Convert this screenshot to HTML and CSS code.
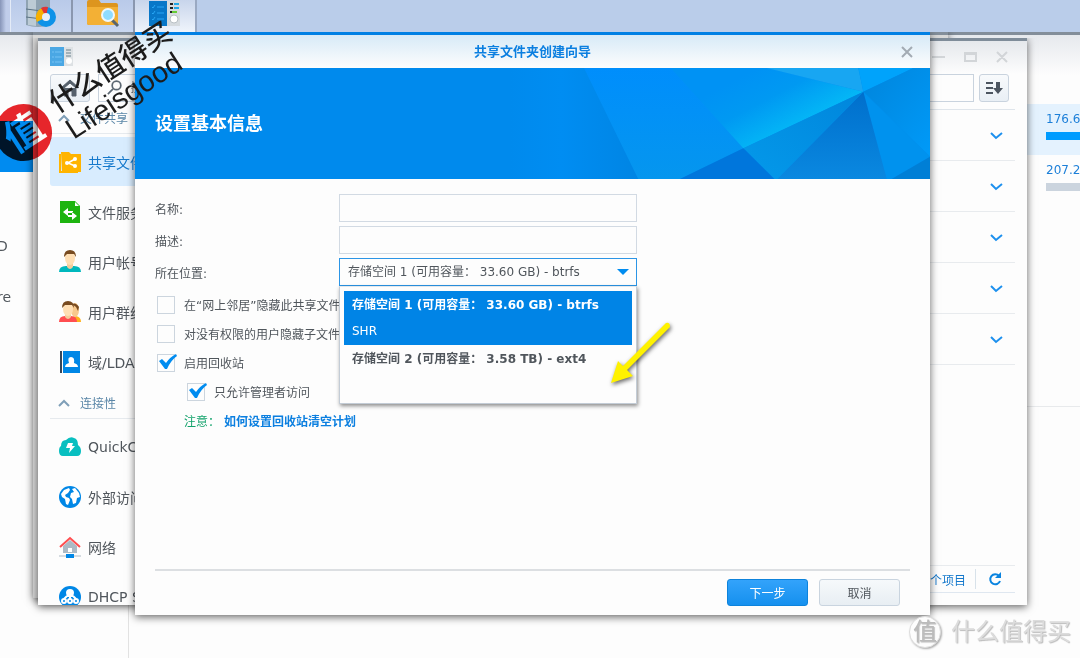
FILE: index.html
```html
<!DOCTYPE html>
<html lang="zh-CN">
<head>
<meta charset="utf-8">
<title>共享文件夹创建向导</title>
<link rel="stylesheet" href="styles.css">
</head>
<body>
<div class="desktop">
  <nav class="taskbar" aria-label="任务栏">
    <span class="task-edge"></span>
    <button class="task" type="button" aria-label="存储空间管理员">
      <svg width="34" height="32" viewBox="0 0 34 32">
        <path d="M2 0h24v25q-12 4-24 0z" fill="#8fa3b2"/><path d="M4 0h8v26l-8-1z" fill="#bccbd5"/>
        <path d="M2 9q12 3 24 0M2 17q12 3 24 0" stroke="#5c7485" fill="none"/>
        <circle cx="22" cy="17" r="10" fill="#0e92e8"/><path d="M22 17L13 22A10 10 0 0 1 18 8z" fill="#f7b000"/><path d="M22 17L17 8A10 10 0 0 1 24 7z" fill="#e03434"/>
        <circle cx="22" cy="17" r="4" fill="#e7eef7"/>
      </svg>
    </button>
    <button class="task" type="button" aria-label="文件管理">
      <svg width="34" height="32" viewBox="0 0 34 32">
        <path d="M1 2q0-2 2-2h10l2 3h15q2 0 2 2v18q0 2-2 2H3q-2 0-2-2z" fill="#dd951e"/><path d="M1 7h31v16q0 2-2 2H3q-2 0-2-2z" fill="#f3b035"/>
        <path d="M26 20l6 6" stroke="#59656d" stroke-width="3"/><circle cx="22" cy="15" r="6" fill="#8fdcff" stroke="#eef7fc" stroke-width="2"/>
      </svg>
    </button>
    <button class="task task-active" type="button" aria-label="控制面板">
      <svg width="34" height="32" viewBox="0 0 34 32">
        <path d="M1 1h18v25H1z" fill="#0877c8"/><path d="M19 1h13v25H19z" fill="#d6dbdf"/>
        <path d="M4 7l1 1 2-3M4 13l1 1 2-3M4 19l1 1 2-3M9 7h7M9 13h7M9 19h7" stroke="#28a6f5" fill="none"/>
        <path d="M22 4h3m-3 4h3m-3 4h3" stroke="#222" stroke-width="2"/><path d="M26 4h5M26 8h5" stroke="#1fa7e8" stroke-width="2"/><path d="M24 12h5" stroke="#6c3" stroke-width="2"/>
        <circle cx="26" cy="19" r="4" fill="#fff" stroke="#b9c0c5"/>
      </svg>
    </button>
  </nav>

  <section class="storage" aria-label="存储空间管理员">
    <div class="storage-nav">
      <a class="storage-item selected" href="#overview" aria-label="总览"></a>
      <a class="storage-item" href="#d">D</a>
      <a class="storage-item" href="#re">re</a>
    </div>
    <div class="storage-main">
      <div class="volumes">
        <div class="volume current">176.60 GB<span class="meter"></span></div>
        <div class="volume">207.21 GB<span class="meter"></span></div>
      </div>
    </div>
  </section>

  <div class="window behind"></div>

  <section class="window panel" aria-label="控制面板">
    <header class="panel-head">
      <svg width="24" height="20" viewBox="0 0 24 20"><path d="M0 0h14v19H0z" fill="#4aa7e4"/><path d="M14 0h9v19h-9z" fill="#dde1e4"/><path d="M2 5h2m1 0h7M2 10h2m1 0h7M2 15h2m1 0h7" stroke="#74c2f4"/><path d="M16 3h5m-5 3h5m-5 3h5" stroke="#69808c"/><circle cx="19" cy="14" r="3" fill="#fff"/></svg>
      <svg class="win-tools" width="78" height="16" viewBox="0 0 78 16" fill="none" stroke="#d2d5d8" stroke-width="2"><path d="M1 8h13M34 4h11v8H34zM34 5h11M66 3l10 10M76 3L66 13"/></svg>
    </header>
    <div class="toolbar">
      <button class="tool home" type="button" aria-label="主页"><svg width="20" height="18" viewBox="0 0 20 18"><path d="M1 9l9-8 9 8M4 9v8h4v-5h4v5h4V9l-6-5z" fill="#56616c" stroke="#56616c" stroke-width="1"/></svg></button>
      <label class="search"><svg width="18" height="18" viewBox="0 0 18 18" fill="none" stroke="#5c6873" stroke-width="2"><circle cx="11" cy="6" r="5"/><path d="M7 10l-6 6"/></svg><input type="text" placeholder="搜索" aria-label="搜索设置"></label>
      <input class="filter" type="text" aria-label="筛选">
      <button class="tool" type="button" aria-label="排序"><svg width="18" height="14" viewBox="0 0 18 14"><path d="M1 2h7M1 7h7M1 12h7" stroke="#4c5560" stroke-width="2"/><path d="M11 1h4v6h3l-5 6-5-6h3z" fill="#4c5560"/></svg></button>
    </div>
    <div class="panel-body">
      <nav class="sidebar">
        <h3 class="group"><svg width="12" height="8" viewBox="0 0 12 8"><path d="M1 7l5-5 5 5"/></svg>文件共享</h3>
        <a class="entry active" href="#share"><svg width="22" height="22" viewBox="0 0 22 22"><path d="M0 3h2v17h17v2H0z" fill="#ffb400"/><path d="M2 1h8l2 2h10v18H3z" fill="#ffb400"/><path d="M16 8l-7 4 7 3" stroke="#fff" stroke-width="1.5" fill="none"/><circle cx="16" cy="8" r="2" fill="#fff"/><circle cx="8" cy="12" r="2" fill="#fff"/><circle cx="16" cy="15" r="2" fill="#fff"/></svg>共享文件夹</a>
        <a class="entry" href="#service"><svg width="22" height="22" viewBox="0 0 22 22"><path d="M1 0h15l5 5v17H1z" fill="#1db40f"/><path d="M16 1l4 4h-4z" fill="#fff"/><path d="M4 11l5-4v3h5v2H9v3zM18 15l-5-4v3H9v2h4v3z" fill="#fff"/></svg>文件服务</a>
        <a class="entry" href="#user"><svg width="22" height="23" viewBox="0 0 22 23"><path d="M0 22q0-6 7-6h8q7 0 7 6z" fill="#00b8bd"/><path d="M8 12h6v5q-3 4-6 0z" fill="#f3cc9b"/><ellipse cx="11" cy="8" rx="5" ry="7" fill="#ffdfb4"/><path d="M5 7Q5 0 11 0t6 7l-2-3H8z" fill="#784b20"/></svg>用户帐号</a>
        <a class="entry" href="#group"><svg width="22" height="23" viewBox="0 0 22 23"><path d="M12 22q0-6 5-6 5 1 5 6z" fill="#ffb21c"/><ellipse cx="16" cy="10" rx="4" ry="7" fill="#f8c98d"/><path d="M13 4q4-2 7 3l-1 4-2-4z" fill="#784b20"/><path d="M0 22q0-6 6-6h6q6 0 6 6z" fill="#ff4e50"/><path d="M6 12h6v5q-3 4-6 0z" fill="#f3cc9b"/><ellipse cx="9" cy="9" rx="5" ry="7" fill="#ffdfb4"/><path d="M3 8Q3 1 9 1t6 7l-2-3H6z" fill="#784b20"/></svg>用户群组</a>
        <a class="entry" href="#ldap"><svg width="22" height="22" viewBox="0 0 22 22"><path d="M1 0h2v22H1z" fill="#38475a"/><path d="M4 0h17v22H4z" fill="#0087e6"/><path d="M7 16q0-3 4-3-2-7 2-7" fill="none"/><path d="M6 16q0-3 4-4-2-6 2-6t3 6q4 1 4 4z" fill="#fff"/></svg>域/LDAP</a>
        <h3 class="group"><svg width="12" height="8" viewBox="0 0 12 8"><path d="M1 7l5-5 5 5"/></svg>连接性</h3>
        <a class="entry" href="#quick"><svg width="22" height="22" viewBox="0 0 22 22"><path d="M4 20q-4 0-4-5 0-4 2-5 0-6 5-6 4-4 8-2 4 1 4 7 3 2 3 6 0 5-4 5z" fill="#08bfc0"/><path d="M9 7h5l-1 3h3l-6 7 1-5H7z" fill="#fff"/></svg>QuickConnect</a>
        <a class="entry" href="#access"><svg width="22" height="22" viewBox="0 0 22 22"><circle cx="11" cy="11" r="11" fill="#0087e6"/><path d="M2 8l3-4 5-2 1 2-2 3-3 2 1 2 3 1 1 2-2 5-2-1-1-5-3-2zM13 3l3-1 4 5 1 4-3 1-1 5-3 1-1-5-2-2 1-4 3-1z" fill="#fff"/></svg>外部访问</a>
        <a class="entry" href="#network"><svg width="22" height="22" viewBox="0 0 22 22"><path d="M4 10l7-6 7 6v7H4z" fill="#adbac5"/><path d="M1 11l10-9 10 9" stroke="#ff4e50" stroke-width="2" fill="none"/><path d="M9 12h4v4H9z" fill="#fff"/><path d="M0 20h22" stroke="#adbac5"/><path d="M7 18h8v4H7z" fill="#0087e6"/></svg>网络</a>
        <a class="entry" href="#dhcp"><svg width="22" height="22" viewBox="0 0 22 22"><circle cx="11" cy="11" r="11" fill="#0087e6"/><path d="M11 3q4 0 4 4l-1 4h-6L7 7q0-4 4-4z" fill="#fff"/><g fill="none" stroke="#fff" stroke-width="2"><path d="M8 10l-3 3M11 10v3M14 10l3 3"/><circle cx="5" cy="15" r="2"/><circle cx="11" cy="15" r="2"/><circle cx="17" cy="15" r="2"/></g></svg>DHCP Server</a>
      </nav>
      <div class="shares">
        <button class="share-row" type="button" aria-label="展开 1"><svg width="13" height="9" viewBox="0 0 13 9"><path d="M1 1l5 5 6-5"/></svg></button>
        <button class="share-row" type="button" aria-label="展开 2"><svg width="13" height="9" viewBox="0 0 13 9"><path d="M1 1l5 5 6-5"/></svg></button>
        <button class="share-row" type="button" aria-label="展开 3"><svg width="13" height="9" viewBox="0 0 13 9"><path d="M1 1l5 5 6-5"/></svg></button>
        <button class="share-row" type="button" aria-label="展开 4"><svg width="13" height="9" viewBox="0 0 13 9"><path d="M1 1l5 5 6-5"/></svg></button>
        <button class="share-row" type="button" aria-label="展开 5"><svg width="13" height="9" viewBox="0 0 13 9"><path d="M1 1l5 5 6-5"/></svg></button>
        <footer class="status"><span>个项目</span><button type="button" aria-label="刷新"><svg width="14" height="14" viewBox="0 0 14 14"><path d="M11 4a5 5 0 1 0 1 5" fill="none" stroke="#0a84e0" stroke-width="2"/><path d="M13 0v6H7z" fill="#0a84e0"/></svg></button></footer>
      </div>
    </div>
  </section>

  <section class="window dialog" role="dialog" aria-labelledby="dialog-title">
    <header class="dialog-head">
      <h1 id="dialog-title">共享文件夹创建向导</h1>
      <button class="close" type="button" aria-label="关闭"><svg width="12" height="12" viewBox="0 0 12 12"><path d="M1 1l10 10M11 1L1 11" stroke="#a3abb3" stroke-width="2"/></svg></button>
    </header>
    <div class="banner">
      <h2>设置基本信息</h2>
      <svg width="420" height="111" viewBox="-210 204 1260 333" preserveAspectRatio="none">
        <defs>
          <linearGradient id="g0" x1="0" y1="0" x2="1" y2="0"><stop offset="0" stop-color="#008aed"/><stop offset=".4" stop-color="#008df2"/><stop offset="1" stop-color="#0085e4"/></linearGradient>
          <linearGradient id="g1" x1="0" y1="0" x2="0" y2="1"><stop offset="0" stop-color="#008efc"/><stop offset="1" stop-color="#0596ee"/></linearGradient>
          <linearGradient id="g2" gradientUnits="userSpaceOnUse" x1="520" y1="210" x2="620" y2="400"><stop offset="0" stop-color="#0092f4"/><stop offset=".45" stop-color="#0099f2"/><stop offset="1" stop-color="#04b8f6"/></linearGradient>
          <linearGradient id="g3" x1="0" y1="0" x2="0" y2="1"><stop offset="0" stop-color="#006fcc"/><stop offset="1" stop-color="#0a88e0"/></linearGradient>
          <linearGradient id="g4" x1="0" y1="0" x2="1" y2="1"><stop offset="0" stop-color="#0085dc"/><stop offset="1" stop-color="#009af8"/></linearGradient>
          <linearGradient id="g5" x1="1" y1="0" x2="0" y2="1"><stop offset="0" stop-color="#0086dc"/><stop offset="1" stop-color="#0499ea"/></linearGradient>
        </defs>
        <path d="M-210 204H12L175 537H-210z" fill="url(#g0)"/>
        <path d="M12 204H560L850 275 490 445 300 537H175z" fill="url(#g1)"/>
        <path d="M272 204H560L850 275 490 445z" fill="url(#g2)"/>
        <path d="M560 204H835L850 275z" fill="#18a6f2"/>
        <path d="M835 204H1000L850 275z" fill="#00a3fb"/>
        <path d="M1000 204H1050V470L850 275z" fill="url(#g4)"/>
        <path d="M850 275L1050 470 935 537H920z" fill="#0092ee"/>
        <path d="M1050 470V537H935z" fill="#007fd6"/>
        <path d="M850 275L920 537H592z" fill="url(#g3)"/>
        <path d="M850 275L592 537H583L490 445z" fill="url(#g5)"/>
        <path d="M490 445L583 537H300z" fill="#0076dc"/>
      </svg>
    </div>
    <form class="form">
      <div class="field"><label for="name">名称:</label><input id="name" type="text"></div>
      <div class="field"><label for="desc">描述:</label><input id="desc" type="text"></div>
      <div class="field">
        <label for="place">所在位置:</label>
        <div class="combo">
          <select id="place"><option>存储空间 1 (可用容量： 33.60 GB) - btrfs</option></select>
          <svg class="caret" width="12" height="6" viewBox="0 0 12 6"><path d="M0 0h12L6 6z" fill="#008cf0"/></svg>
          <ul class="menu" role="listbox" aria-label="所在位置">
            <li role="option" aria-selected="true"><b>存储空间 1 (可用容量： 33.60 GB) - btrfs</b><span>SHR</span></li>
            <li role="option" aria-selected="false"><b>存储空间 2 (可用容量： 3.58 TB) - ext4</b></li>
          </ul>
        </div>
      </div>
      <div class="checks">
        <label class="check"><input type="checkbox">在“网上邻居”隐藏此共享文件夹</label>
        <label class="check"><input type="checkbox">对没有权限的用户隐藏子文件夹</label>
        <label class="check"><input type="checkbox" checked><svg class="tick" width="19" height="15" viewBox="0 0 19 15"><path d="M1 7l3-2 4 4Q12 3 18 0l1 2Q13 6 9 15H7z" fill="#008cf0"/></svg>启用回收站</label>
        <label class="check nested"><input type="checkbox" checked><svg class="tick" width="19" height="15" viewBox="0 0 19 15"><path d="M1 7l3-2 4 4Q12 3 18 0l1 2Q13 6 9 15H7z" fill="#008cf0"/></svg>只允许管理者访问</label>
        <p class="note"><span>注意：</span><a href="#plan">如何设置回收站清空计划</a></p>
      </div>
    </form>
    <footer class="actions">
      <button class="primary" type="button">下一步</button>
      <button type="button">取消</button>
    </footer>
    <svg class="pointer" width="80" height="80" viewBox="0 0 80 80"><path d="M10 68L17 46 22 51 65 8Q69 7 69 12L26 55 32 61z" fill="#fff200"/></svg>
  </section>

  <div class="seal">值</div>
  <div class="stamp"><div class="stamp-cn">什么值得买</div><div class="stamp-en">Lifeisgood</div></div>
  <div class="credit"><span class="credit-seal">值</span><span>什么值得买</span></div>
</div>
</body>
</html>
```
FILE: styles.css
```css
* { box-sizing: border-box; }
body, h1, h2, h3, p, ul { margin: 0; padding: 0; }
body, button, input, select { font-family: "DejaVu Sans", "Noto Sans CJK SC", sans-serif; font-size: 12px; color: #50565c; }
button { cursor: pointer; }
a { text-decoration: none; color: inherit; }

.desktop { position: relative; display: flex; flex-direction: column; min-height: 100vh; overflow: hidden; background: #fdfdfd; }
.taskbar { display: flex; height: 32px; background: #bacdea; }
.task-edge { width: 11px; background: linear-gradient(90deg, #8795b8, #c0cdea 6px); border-right: 1px solid #e4ebf7; }
.task { display: flex; justify-content: center; align-items: flex-start; width: 62px; padding: 0; border: 0; border-right: 2px solid #8a97af; background: linear-gradient(#b9cae9, #c9d7f0); overflow: hidden; }
.task-active { background: linear-gradient(#c8d5eb, #eff4fb); border-right-color: #9aa9c2; }

/* Storage manager, maximised below the other windows */
.storage { flex: 1; display: flex; justify-content: space-between; border-top: 3px solid #838e9a; background: linear-gradient(#e6e9ed, #fdfdfd 40px); }
.storage-nav { width: 129px; padding-top: 86px; border-right: 1px solid #e2e2e2; font-size: 14px; }
.storage-item { display: flex; align-items: center; height: 51px; margin-left: -3px; }
.storage-item.selected { background: #008bf0; }
.selected + .storage-item { margin-top: 48px; }
.storage-main { width: 53px; padding-top: 69px; }
.volumes { height: 303px; border-bottom: 1px solid #e8eaec; }
.volume { display: flex; flex-direction: column; gap: 5px; height: 51px; padding: 7px 0 0 19px; line-height: 16px; white-space: nowrap; color: #1c7fd8; overflow: hidden; }
.volume.current { background: #e4f2fe; }
.meter { height: 8px; background: #cbd4de; }
.current .meter { background: #009cff; }

.window { position: absolute; background: #fdfdfd; box-shadow: 0 2px 8px rgba(0, 0, 0, .6); }
.behind { top: 32px; bottom: 60px; left: 33px; right: 132px; background: #d8d8d8; border-top: 3px solid #838e9a; clip-path: inset(0 -12px -12px -12px); }

.panel { display: flex; flex-direction: column; top: 38px; bottom: 53px; left: 38px; right: 53px; border-top: 3px solid #7f8c99; background: linear-gradient(#e5e8ec, #fdfdfd 33px); clip-path: inset(0 -12px -12px -12px); }
.panel-head { display: flex; justify-content: space-between; align-items: center; height: 32px; padding: 0 18px 0 12px; }
.toolbar { display: flex; align-items: center; gap: 5px; height: 29px; padding: 0 18px 0 12px; }
.tool { display: flex; align-items: center; justify-content: center; width: 30px; height: 28px; padding: 0; border: 1px solid #c9d3de; border-radius: 3px; background: linear-gradient(#f8fafc, #e9eff5); }
.home { width: 40px; margin-right: 3px; }
.search { display: flex; align-items: center; gap: 6px; width: 180px; height: 28px; padding: 0 8px; border: 1px solid #c9d3de; }
.search input { width: 100%; border: 0; background: none; }
.filter { width: 200px; height: 28px; margin-left: auto; border: 1px solid #c9d3de; background: #fdfdfd; }
.panel-body { flex: 1; display: flex; gap: 20px; min-height: 0; padding: 0 12px; }
.sidebar { width: 200px; overflow: hidden; font-size: 14px; }
.group { display: flex; align-items: center; gap: 10px; height: 32px; margin-bottom: 3px; padding-left: 8px; border-bottom: 1px solid #e6eaee; font-size: 12px; font-weight: normal; color: #5b87a8; }
.group svg, .share-row svg { fill: none; stroke: #7f9fb8; stroke-width: 2; }
.entry { display: flex; align-items: center; gap: 7px; height: 49px; margin-bottom: 1px; padding-left: 9px; white-space: nowrap; border-radius: 3px; }
.entry.active { background: #d8ecfe; color: #1579cc; }
.shares { flex: 1; display: flex; flex-direction: column; margin-top: 7px; border-top: 1px solid #dfe5eb; }
.share-row { display: flex; justify-content: flex-end; align-items: center; height: 51px; padding: 2px 12px 0 0; border: 0; border-bottom: 1px solid #e8ebee; background: none; }
.share-row svg { stroke: #1d90ee; }
.status { display: flex; justify-content: flex-end; align-items: center; height: 28px; margin-top: auto; margin-bottom: 12px; border-top: 1px solid #e8ebee; border-bottom: 1px solid #dfe7f0; color: #1579cc; }
.status button { display: flex; margin-left: 9px; padding: 3px 13px 3px 12px; border: 0; border-left: 1px solid #d8e2ea; background: none; }

.dialog { display: flex; flex-direction: column; top: 32px; bottom: 43px; left: 135px; right: 150px; border-top: 3px solid #0080e4; clip-path: inset(0 -12px -12px -12px); }
.dialog-head { display: flex; align-items: center; height: 33px; padding: 0 17px 0 29px; background: linear-gradient(#d7eaf7, #fdfdfd); }
.dialog-head h1 { flex: 1; text-align: center; font-size: 13px; line-height: 18px; color: #0b7fe0; }
.close { display: flex; padding: 0; border: 0; background: none; }
.banner { display: flex; justify-content: space-between; align-items: center; height: 111px; padding-left: 20px; background: #008aed; }
.banner h2 { font-size: 18px; line-height: 24px; color: #fff; }
.form { padding: 15px 20px 0; }
.field { display: flex; align-items: center; height: 28px; margin-bottom: 4px; }
.field > label { width: 184px; }
.field > input, .combo { width: 298px; height: 28px; }
.field > input { border: 1px solid #d2dae3; background: #fdfdfd; }
.combo { position: relative; }
.combo select { appearance: none; width: 100%; height: 100%; padding: 0 24px 0 8px; border: 1px solid #2b95e6; border-radius: 0; background: #fdfdfd; }
.caret { position: absolute; right: 8px; top: 11px; pointer-events: none; }
.menu { position: absolute; z-index: 2; top: 28px; left: 0; right: 0; padding: 4px; list-style: none; background: #fdfdfd; border: 1px solid #c3ccd6; border-top-color: #e4e8ec; box-shadow: 1px 2px 4px rgba(0, 0, 0, .45); }
.menu li { display: flex; flex-direction: column; gap: 10px; height: 54px; padding: 6px 8px; line-height: 16px; white-space: nowrap; }
.menu li[aria-selected="true"] { background: #0084e6; color: #fff; }
.checks { display: grid; grid-auto-rows: 29px; width: 320px; padding-left: 2px; }
.check { position: relative; display: flex; align-items: center; gap: 9px; white-space: nowrap; }
.check input { appearance: none; width: 18px; height: 18px; margin: 0; border: 1px solid #ccd5de; background: #fdfdfd; }
.tick { position: absolute; left: 1px; top: 6px; }
.nested { margin-left: 30px; }
.note { display: flex; align-items: center; gap: 4px; padding-left: 27px; color: #12a26b; }
.note a { font-weight: bold; color: #0b7fe0; }
.actions { display: flex; justify-content: flex-end; gap: 11px; margin: auto 20px 0; padding: 8px 10px 9px; border-top: 2px solid #dcdfe2; }
.actions button { width: 81px; height: 27px; padding: 0; border: 1px solid #c9d4df; border-radius: 3px; background: linear-gradient(#f6f9fb, #e8eef3); }
.actions .primary { border-color: #0d83dc; background: linear-gradient(#33a3fb, #1590ee); color: #fff; }
.pointer { position: absolute; left: 466px; top: 280px; z-index: 3; filter: drop-shadow(1px 2px 2px rgba(0, 0, 0, .6)); }

.seal { position: absolute; left: -5px; top: 104px; display: flex; align-items: center; justify-content: center; width: 57px; height: 57px; border-radius: 50%; background: #e8262b; color: #fff; font-size: 38px; font-weight: bold; line-height: 1; transform: rotate(-33deg); mix-blend-mode: multiply; }
.stamp { position: absolute; left: 48px; top: 48px; width: 150px; transform: rotate(-33deg); font-family: "Liberation Sans", "Noto Sans CJK SC", sans-serif; font-size: 29px; line-height: 30px; color: #1c1c1c; white-space: nowrap; }
.stamp-cn { font-size: 28px; font-weight: 500; }
.credit { position: absolute; right: 9px; bottom: 9px; display: flex; align-items: center; gap: 10px; font-size: 24px; line-height: 34px; color: #dcdcdc; text-shadow: 1px 1px 1px #bbb; }
.credit-seal { display: flex; align-items: center; justify-content: center; width: 32px; height: 32px; border-radius: 50%; border: 1px solid #ddd; background: #fdfdfd; box-shadow: 1px 1px 2px #aaa; color: #bbb; }
```
